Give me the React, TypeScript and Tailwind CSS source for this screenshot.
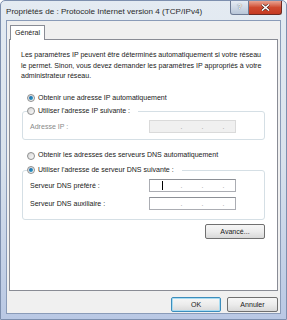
import type { ReactNode } from 'react'

const font = { fontFamily: '"Liberation Sans", Arial, sans-serif' }

function Radio({ checked, label, disabled }: { checked?: boolean; label: string; disabled?: boolean }) {
  return (
    <div className="flex items-center gap-[3px]">
      <span className="flex h-[8px] w-[8px] items-center justify-center rounded-full border border-[#8e8f8f] bg-gradient-to-br from-[#d6d6d6] to-[#fbfbfb]">
        {checked && <span className="h-[4px] w-[4px] rounded-full bg-gradient-to-br from-[#1b5fa8] to-[#2fa3c8]" />}
      </span>
      <span className={disabled ? 'text-[#8a8a8a]' : 'text-[#1a1a1a]'}>{label}</span>
    </div>
  )
}

function IpField({ disabled, caret }: { disabled?: boolean; caret?: boolean }) {
  return (
    <div
      className={`flex h-[13px] w-[87px] items-center border ${
        disabled ? 'border-[#dadada] bg-[#f0f0f0]' : 'border-[#abadb3] border-t-[#8d9096] bg-white'
      }`}
    >
      <span className="w-[21px] pl-[12px]">{caret && <span className="block h-[9px] w-px bg-black" />}</span>
      <span className="w-[21px] text-center text-[#9a9a9a]">.</span>
      <span className="w-[21px] text-center text-[#9a9a9a]">.</span>
      <span className="w-[21px] text-center text-[#9a9a9a]">.</span>
    </div>
  )
}

function Group({ legend, children, className }: { legend: ReactNode; children: ReactNode; className?: string }) {
  return (
    <fieldset className={`mx-[1px] rounded-[3px] border border-[#d5dfe5] px-[7px] ${className ?? ''}`}>
      <legend className="ml-[-3px] pr-[8px]">{legend}</legend>
      {children}
    </fieldset>
  )
}

function Button({ children, primary, className }: { children: ReactNode; primary?: boolean; className?: string }) {
  return (
    <div
      className={`flex h-[15px] items-center justify-center rounded-[2px] border bg-gradient-to-b from-[#f6f6f6] via-[#ececec] to-[#d9d9d9] text-[#1a1a1a] ${
        primary ? 'border-[#3c8dbc] shadow-[inset_0_0_0_1px_#a9dcf2]' : 'border-[#707070]'
      } ${className ?? ''}`}
    >
      {children}
    </div>
  )
}

export default function App() {
  return (
    <div
      style={font}
      className="flex h-[320px] w-[287px] flex-col rounded-t-[5px] border border-[#7d8fae] bg-gradient-to-b from-[#e4ebf2] via-[#d9e2ec] to-[#b9c8e4] text-[7.05px] leading-[10.4px]"
    >
      {/* Title bar */}
      <div className="flex h-[19px] items-start">
        <div className="flex-1 pt-[6px] pl-[5px] text-[8.1px] text-[#2a2a2a]">
          Propriétés de : Protocole Internet version 4 (TCP/IPv4)
        </div>
        <div className="mr-[4px] flex">
          <div className="flex h-[14px] w-[19px] items-center justify-center rounded-bl-[3px] border border-t-0 border-[#6d7b94] bg-gradient-to-b from-[#e6ecf3] to-[#b8c6d8] text-[8px] font-bold text-white [text-shadow:0_0_1px_#333]">
            ?
          </div>
          <div className="flex h-[14px] w-[33px] items-center justify-center rounded-br-[3px] border border-t-0 border-l-0 border-[#6d2a22] bg-gradient-to-b from-[#e8a493] via-[#cf4a2f] to-[#c53a22]">
            <svg width="9" height="7" viewBox="0 0 9 7">
              <path d="M1 0.5 L8 6.5 M8 0.5 L1 6.5" stroke="#3a1510" strokeWidth="2.6" />
              <path d="M1 0.5 L8 6.5 M8 0.5 L1 6.5" stroke="#ffffff" strokeWidth="1.6" />
            </svg>
          </div>
        </div>
      </div>

      {/* Body */}
      <div className="mx-[5px] mb-[5px] flex flex-1 flex-col border border-[#8a9bb8] bg-[#f0f0f0] px-[2px] pt-[4px]">
        {/* Tab header */}
        <div className="flex">
          <div className="relative z-10 -mb-px ml-[1px] border border-b-0 border-[#898c95] bg-white px-[4px] pt-[2px] pb-[2px] text-[#1a1a1a]">
            Général
          </div>
        </div>

        {/* Tab panel */}
        <div className="flex h-[252px] flex-col border border-[#898c95] bg-white px-[11px] pt-[10px]">
          <p className="text-[#1a1a1a]">
            Les paramètres IP peuvent être déterminés automatiquement si votre réseau le permet. Sinon, vous devez
            demander les paramètres IP appropriés à votre administrateur réseau.
          </p>

          <div className="mt-[11px] pl-[6px]">
            <Radio checked label="Obtenir une adresse IP automatiquement" />
          </div>
          <div className="mt-[3px]">
            <Group legend={<Radio label="Utiliser l'adresse IP suivante :" />} className="pb-[6px]">
              <div className="flex items-center justify-between pt-[4px] pr-[21px]">
                <span className="text-[#8a8a8a]">Adresse IP :</span>
                <IpField disabled />
              </div>
            </Group>
          </div>

          <div className="mt-[10px] pl-[6px]">
            <Radio label="Obtenir les adresses des serveurs DNS automatiquement" />
          </div>
          <div className="mt-[4px]">
            <Group legend={<Radio checked label="Utiliser l'adresse de serveur DNS suivante :" />} className="pb-[9px]">
              <div className="flex flex-col gap-[5px] pt-[4px]">
                <div className="flex items-center justify-between pr-[21px]">
                  <span className="text-[#1a1a1a]">Serveur DNS préféré :</span>
                  <IpField caret />
                </div>
                <div className="flex items-center justify-between pr-[21px]">
                  <span className="text-[#1a1a1a]">Serveur DNS auxiliaire :</span>
                  <IpField />
                </div>
              </div>
            </Group>
          </div>

          <div className="mt-[4px] flex justify-end pr-[1px]">
            <Button className="w-[60px]">Avancé...</Button>
          </div>
        </div>

        {/* Dialog buttons */}
        <div className="flex justify-end gap-[6px] pt-[6px]">
          <Button primary className="w-[50px]">
            OK
          </Button>
          <Button className="w-[51px]">Annuler</Button>
        </div>
      </div>
    </div>
  )
}
